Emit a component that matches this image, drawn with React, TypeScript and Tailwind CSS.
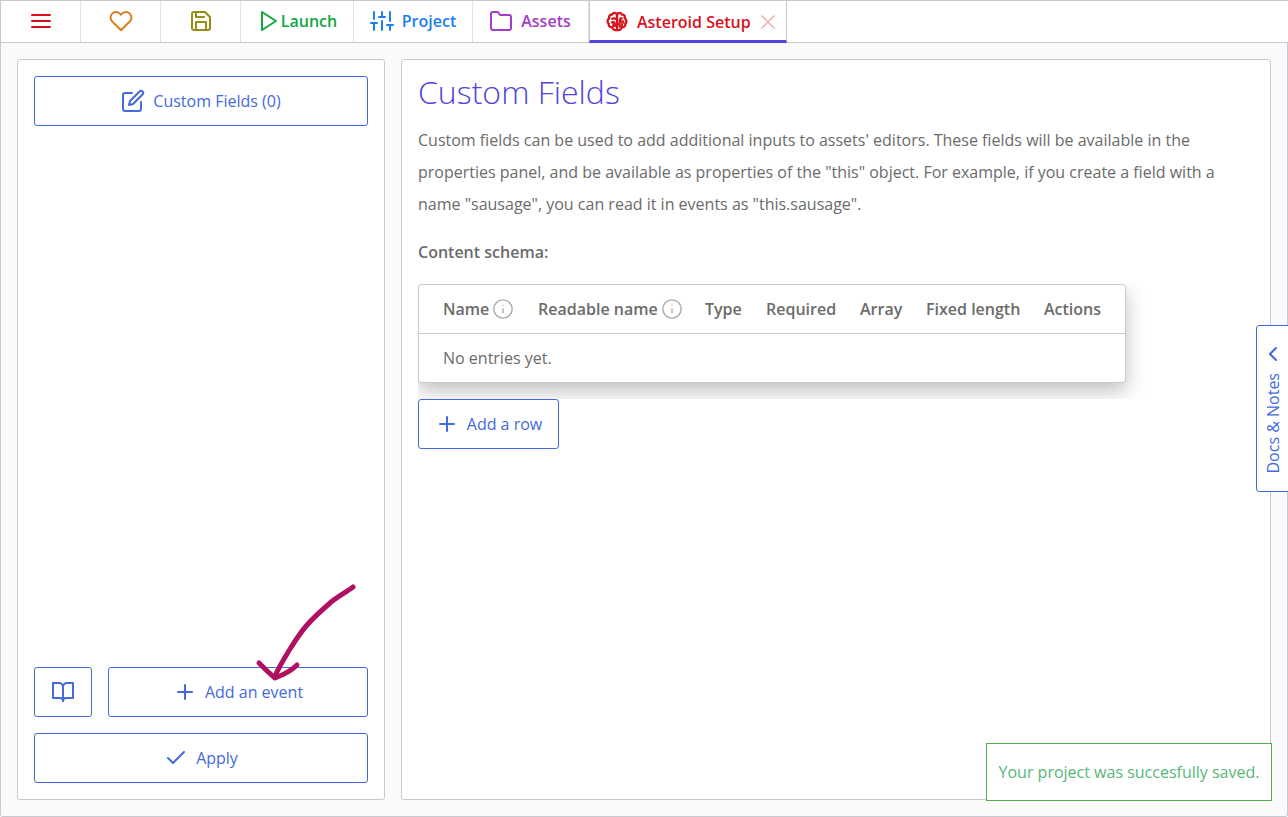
import { FiMenu, FiHeart, FiSave, FiPlay, FiSliders, FiFolder, FiX, FiEdit, FiPlus, FiCheck, FiBookOpen, FiChevronLeft, FiInfo } from "react-icons/fi";

const COLUMNS = [
  { label: "Type", width: "w-[61px]" },
  { label: "Required", width: "w-[94px]" },
  { label: "Array", width: "w-[66px]" },
  { label: "Fixed length", width: "w-[118px]" },
  { label: "Actions", width: "w-[93px]" },
];

function BrainIcon() {
  return (
    <svg viewBox="0 0 24 24" className="w-[22px] h-[22px] shrink-0" fill="none" stroke="#d8121c" strokeWidth="2.6" strokeLinecap="round" strokeLinejoin="round" aria-hidden="true">
      <path d="M12 3.5C10.5 1.5 7.5 1.6 6.6 3.9C4.2 3.7 2.8 6 3.6 8C1.4 9.3 1 12.6 3 14C2.6 16.4 4.6 18.2 6.6 17.6C7.4 19.6 8.8 20.8 10 20.8H14C15.2 20.8 16.6 19.6 17.4 17.6C19.4 18.2 21.4 16.4 21 14C23 12.6 22.6 9.3 20.4 8C21.2 6 19.8 3.7 17.4 3.9C16.5 1.6 13.5 1.5 12 3.5Z" />
      <path d="M12 3.5V20.5" />
      <path d="M7 8.5C8.5 7.5 10 8 12 9" />
      <path d="M17 8C15.5 7.5 15 10 15 12C15 14.5 13.5 15 12 14.5" />
      <path d="M6.5 12.5C8 11.5 9.5 12 9.5 14.5" />
      <path d="M17.5 15C16.5 15.5 15.5 16 15 17" />
      <circle cx="9" cy="15.5" r="1" />
      <circle cx="18" cy="12" r="0.8" />
    </svg>
  );
}

function OutlineButton({ className, children }: { className: string; children: React.ReactNode }) {
  return (
    <button className={`flex items-center justify-center h-[50px] rounded-[3px] border border-[#446adb] bg-white text-[#446adb] ${className}`}>
      {children}
    </button>
  );
}

export default function App() {
  return (
    <div className="relative flex flex-col w-[1288px] h-[817px] overflow-hidden bg-white text-[16px] text-[#6b6b6b] font-['Open_Sans',sans-serif]">
      {/* Tabs */}
      <nav className="flex h-[43px] shrink-0 border-y border-l border-[#c5cad1] font-semibold">
        <div className="flex items-center justify-center w-[80px] pb-[2px] pl-px border-r border-[#dfe2e6] text-[#d8121c]">
          <FiMenu className="w-6 h-6" />
        </div>
        <div className="flex items-center justify-center w-[80px] pb-[2px] border-r border-[#dfe2e6] text-[#dd7f1c]">
          <FiHeart className="w-6 h-6" />
        </div>
        <div className="flex items-center justify-center w-[80px] pb-[2px] border-r border-[#dfe2e6] text-[#958f12]">
          <FiSave className="w-6 h-6" />
        </div>
        <div className="flex items-center justify-center w-[113px] pb-[2px] border-r border-[#dfe2e6] text-[#11a83f]">
          <FiPlay className="w-6 h-6" />
          <span>Launch</span>
        </div>
        <div className="flex items-center justify-center gap-2 w-[119px] pb-[2px] border-r border-[#dfe2e6] text-[#1a80ec]">
          <FiSliders className="w-6 h-6" />
          <span>Project</span>
        </div>
        <div className="flex items-center justify-center gap-2 w-[116px] pb-[2px] pr-px border-r border-[#dfe2e6] text-[#a63cc6]">
          <FiFolder className="w-6 h-6" />
          <span>Assets</span>
        </div>
        <div className="flex items-center w-[198px] -mt-px h-[43px] pl-4 pt-[2px] border-x border-t border-b-[3px] border-x-[#c5cad1] border-t-[#c5cad1] border-b-[#5144db] text-[#d8121c]">
          <BrainIcon />
          <span className="ml-[9px]">Asteroid Setup</span>
          <FiX className="ml-[5px] w-6 h-6 text-[#f2b3b5] stroke-[1.75]" />
        </div>
      </nav>

      {/* Workspace */}
      <main className="flex flex-1 min-h-0 gap-4 p-4 bg-[#fafafa] border-x border-b border-[#c5cad1] rounded-b-[3px]">
        <aside className="flex flex-col justify-between w-[368px] shrink-0 p-4 bg-white border border-[#c5cad1] rounded-[3px]">
          <OutlineButton className="gap-2 w-full">
            <FiEdit className="w-6 h-6" />
            <span>Custom Fields (0)</span>
          </OutlineButton>
          <div className="flex flex-col gap-4">
            <div className="flex gap-4">
              <OutlineButton className="w-[58px] shrink-0">
                <FiBookOpen className="w-6 h-6" />
              </OutlineButton>
              <OutlineButton className="gap-2 flex-1">
                <FiPlus className="w-6 h-6" />
                <span>Add an event</span>
              </OutlineButton>
            </div>
            <OutlineButton className="gap-2 w-full">
              <FiCheck className="w-6 h-6" />
              <span>Apply</span>
            </OutlineButton>
          </div>
        </aside>

        <section className="flex-1 min-w-0 p-4 bg-white border border-[#c5cad1] rounded-[3px]">
          <h1 className="text-[32px] leading-[32px] font-light text-[#5144db]">Custom Fields</h1>
          <p className="mt-4 leading-[32px]">
            Custom fields can be used to add additional inputs to assets' editors. These fields will be available in the properties panel, and be available as properties of the "this" object. For example, if you create a field with a name "sausage", you can read it in events as "this.sausage".
          </p>
          <p className="mt-4 leading-[32px] font-semibold">Content schema:</p>

          <div className="overflow-hidden -mr-4 mt-4 pb-4">
            <table className="table-fixed w-[708px] border-separate border-spacing-0 bg-white border border-[#c5cad1] rounded-[3px] shadow-[0_8px_20px_rgba(0,0,0,0.25)]">
              <thead>
                <tr className="h-[49px]">
                  <th className="w-[107px] pl-6 border-b border-[#c5cad1] font-semibold text-left">
                    <span className="flex items-center gap-[3px]">
                      Name <FiInfo className="w-[22px] h-[22px] text-[#a9a9a9] stroke-[1.5]" />
                    </span>
                  </th>
                  <th className="w-[167px] pl-3 border-b border-[#c5cad1] font-semibold text-left">
                    <span className="flex items-center gap-[3px]">
                      Readable name <FiInfo className="w-[22px] h-[22px] text-[#a9a9a9] stroke-[1.5]" />
                    </span>
                  </th>
                  {COLUMNS.map((col) => (
                    <th key={col.label} className={`${col.width} pl-3 border-b border-[#c5cad1] font-semibold text-left`}>
                      {col.label}
                    </th>
                  ))}
                </tr>
              </thead>
              <tbody>
                <tr className="h-[48px]">
                  <td colSpan={7} className="pl-6">No entries yet.</td>
                </tr>
              </tbody>
            </table>
          </div>

          <OutlineButton className="gap-2 w-[141px]">
            <FiPlus className="w-6 h-6" />
            <span>Add a row</span>
          </OutlineButton>
        </section>
      </main>

      {/* Docs tab */}
      <div className="absolute left-[1256px] top-[325px] flex flex-col items-center gap-[11px] w-[40px] h-[167px] pt-4 pl-[1px] pr-[7px] bg-white border border-[#446adb] rounded-l-[3px] text-[#446adb]">
        <FiChevronLeft className="w-6 h-6 -mb-1 shrink-0" />
        <span className="[writing-mode:vertical-rl] rotate-180 whitespace-nowrap leading-6">Docs &amp; Notes</span>
      </div>

      {/* Toast */}
      <div className="absolute left-[986px] top-[743px] flex items-center justify-center w-[286px] h-[58px] bg-white border border-[#4caf50] text-[#56b878]">
        Your project was succesfully saved.
      </div>

      {/* Hand drawn arrow */}
      <svg className="absolute left-0 top-0 w-[1288px] h-[817px] pointer-events-none" fill="none" stroke="#b01060" strokeWidth="5" strokeLinecap="round" strokeLinejoin="round" aria-hidden="true">
        <path d="M353 587C345 593 337 597 330 603C322 610 314 617 307 625C300 633 295 641 290 649C284 659 279 667 275 676" />
        <path d="M259 663C264 668 270 674 275 678C283 675 291 671 297 665" />
      </svg>
    </div>
  );
}
